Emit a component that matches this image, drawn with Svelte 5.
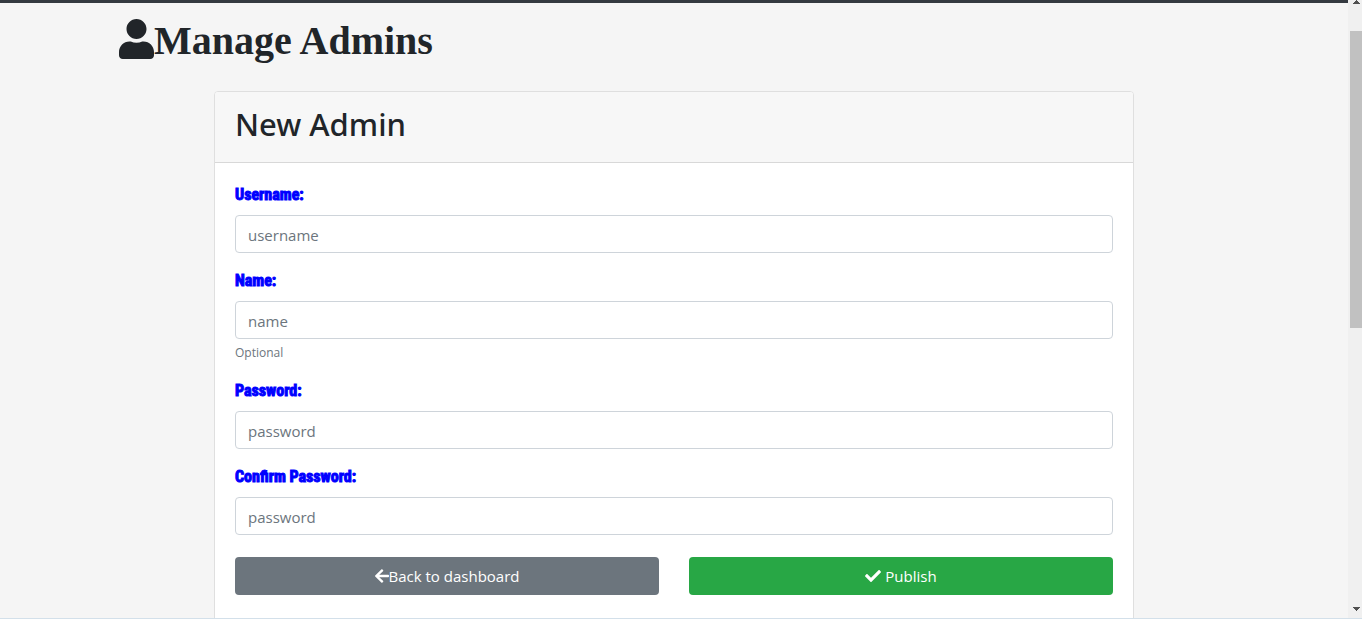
<script>
  const fields = [
    { id: 'username', label: 'Username:', type: 'text', placeholder: 'username' },
    { id: 'name', label: 'Name:', type: 'text', placeholder: 'name', hint: 'Optional' },
    { id: 'password', label: 'Password:', type: 'password', placeholder: 'password' },
    { id: 'confirm', label: 'Confirm Password:', type: 'password', placeholder: 'password' }
  ];
</script>

<div class="window">
  <div class="page">
    <div class="navbar-edge"></div>
    <header class="container title">
      <h1>
        <svg class="user" viewBox="0 0 448 512" aria-hidden="true"><path fill="currentColor" d="M224 256c70.700 0 128-57.300 128-128S294.700 0 224 0 96 57.300 96 128s57.300 128 128 128zm89.600 32h-16.700c-22.200 10.200-46.900 16-72.900 16s-50.600-5.800-72.900-16h-16.700C60.200 288 0 348.200 0 422.400V464c0 26.500 21.500 48 48 48h352c26.500 0 48-21.500 48-48v-41.600c0-74.200-60.200-134.400-134.400-134.400z"/></svg><span>Manage Admins</span>
      </h1>
    </header>
    <main class="container">
      <section class="card">
        <div class="card-header"><h2>New Admin</h2></div>
        <form class="card-body" onsubmit={(e) => e.preventDefault()}>
          {#each fields as f}
            <div class="group">
              <label for={f.id}>{f.label}</label>
              <input id={f.id} type={f.type} placeholder={f.placeholder} />
              {#if f.hint}<small>{f.hint}</small>{/if}
            </div>
          {/each}
          <div class="actions">
            <a class="btn back" href="#dashboard"><svg class="arrow" viewBox="0 0 448 512" aria-hidden="true"><path fill="currentColor" d="M257.500 445.100l-22.200 22.200c-9.400 9.400-24.600 9.400-33.900 0L7 273c-9.400-9.400-9.400-24.600 0-33.900L201.400 44.700c9.400-9.400 24.600-9.400 33.900 0l22.200 22.200c9.500 9.500 9.300 25-.4 34.300L136.600 216H424c13.300 0 24 10.700 24 24v32c0 13.300-10.700 24-24 24H136.600l120.500 114.800c9.800 9.300 10 24.800.4 34.300z"/></svg>Back to dashboard</a>
            <button class="btn publish" type="submit"><svg class="check" viewBox="0 0 512 512" aria-hidden="true"><path fill="currentColor" d="M173.898 439.404l-166.400-166.400c-9.997-9.997-9.997-26.206 0-36.204l36.203-36.204c9.997-9.998 26.207-9.998 36.204 0L192 312.690 432.095 72.596c9.997-9.997 26.207-9.997 36.204 0l36.203 36.204c9.997 9.997 9.997 26.206 0 36.204l-294.400 294.401c-9.998 9.997-26.207 9.997-36.204-.001z"/></svg>Publish</button>
          </div>
        </form>
      </section>
    </main>
  </div>
  <div class="scrollbar" aria-hidden="true">
    <svg class="up" viewBox="0 0 7 4"><path d="M3 0h1v1h1v1h1v1h1v1H0V3h1V2h1V1h1z"/></svg>
    <div class="thumb"></div>
    <svg class="down" viewBox="0 0 7 4"><path d="M0 0h7v1H6v1H5v1H4v1H3V3H2V2H1V1H0z"/></svg>
  </div>
</div>
<div class="edge"></div>

<style>
  :global(body) {
    margin: 0;
    background: #f5f5f5;
    color: #212529;
    font: 15px/24px "Open Sans", "Noto Sans", sans-serif;
  }
  :global(#app) {
    display: flex;
    flex-direction: column;
    height: 100vh;
    overflow: hidden;
  }
  * { box-sizing: border-box; }
  .window { flex: 1; min-height: 0; display: flex; }
  .page { flex: 1; min-width: 0; overflow: hidden; }
  .navbar-edge { height: 3px; background: #343a40; }
  .container { max-width: 1140px; margin: 0 auto; padding: 0 15px; }
  h1 {
    display: flex;
    align-items: center;
    height: 48px;
    margin: 12px 0 28px;
    font: bold 40px/48px "Liberation Serif", serif;
  }
  .user { width: 35px; height: 40px; }
  h1 span { padding-top: 4px; }
  .card {
    width: calc(100% - 190px);
    margin: 0 auto;
    border: 1px solid #dfdfdf;
    border-radius: 4px;
    background: #fff;
  }
  .card::after { content: ""; display: block; height: 40px; }
  .card-header {
    padding: 13px 20px 19px;
    background: #f7f7f7;
    border-bottom: 1px solid #d8d8d8;
    border-radius: 3px 3px 0 0;
  }
  h2 { margin: 0; font: 500 31px/38px "Noto Sans", "Open Sans", sans-serif; }
  .card-body { padding: 20px 20px; }
  .group { margin-bottom: 16px; }
  label {
    display: block;
    margin-bottom: 8px;
    color: #00f;
    font: bold 16px/24px Impact, "Roboto Condensed", "Open Sans Condensed", "Liberation Sans", sans-serif;
    -webkit-text-stroke: 1px #00f;
  }
  input {
    display: block;
    width: 100%;
    height: 38px;
    padding: 8px 12px 6px;
    border: 1px solid #ced4da;
    border-radius: 4px;
    background: #fff;
    font: inherit;
    color: #495057;
  }
  input::placeholder { color: #6c757d; opacity: 1; }
  small { display: block; margin-top: 4px; font-size: 12px; line-height: 20px; color: #6c757d; }
  .actions { display: grid; grid-template-columns: 1fr 1fr; gap: 30px; padding-top: 6px; }
  .btn {
    display: flex;
    align-items: center;
    justify-content: center;
    height: 38px;
    border: 0;
    border-radius: 4px;
    color: #fff;
    font: inherit;
    text-decoration: none;
  }
  .back { background: #6c757d; }
  .publish { background: #28a745; gap: 4px; }
  .arrow { width: 14px; height: 16px; }
  .check { width: 16px; height: 16px; }
  .scrollbar {
    width: 14px;
    display: flex;
    flex-direction: column;
    align-items: flex-end;
    background: #f0f0f0;
  }
  .scrollbar svg { width: 7px; height: 4px; margin-right: 2px; fill: #505050; }
  .thumb { width: 12px; height: 48%; margin-top: 27px; background: #c1c1c1; }
  .scrollbar .down { margin: auto 2px 7px 0; }
  .edge { height: 1px; background: #d3e0ea; }
</style>
